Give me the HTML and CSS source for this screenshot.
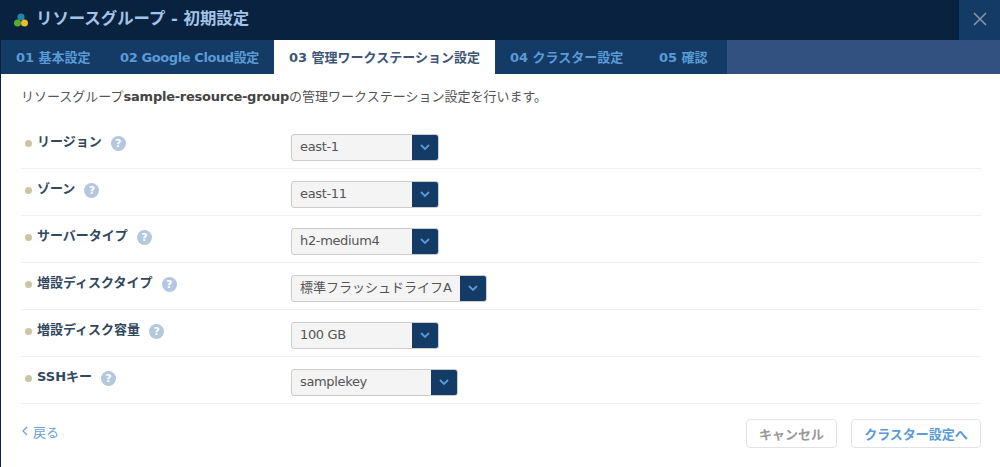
FILE: index.html
```html
<!DOCTYPE html>
<html lang="ja">
<head>
<meta charset="utf-8">
<title>リソースグループ - 初期設定</title>
<link rel="stylesheet" href="styles.css">
</head>
<body>
<div class="dialog">
  <header class="head">
    <h1 class="title">
      <svg class="logo" width="14" height="14" viewBox="0 0 14 14"><circle cx="7" cy="4" r="3.6" fill="#1f86a8"/><circle cx="3.5" cy="10" r="3.5" fill="#58ad2e"/><circle cx="10.5" cy="10" r="3.5" fill="#f0b92a"/></svg>
      <span class="title-text">リソースグループ - 初期設定</span>
    </h1>
    <button class="close" aria-label="閉じる"><svg width="14" height="14" viewBox="0 0 14 14"><path d="M1 1l12 12M13 1L1 13" stroke="#8a97a6" stroke-width="1.5" fill="none"/></svg></button>
  </header>
  <nav class="tabs">
    <a class="tab t1">01 基本設定</a>
    <a class="tab t2">02 Google Cloud設定</a>
    <a class="tab t3 active">03 管理ワークステーション設定</a>
    <a class="tab t4">04 クラスター設定</a>
    <a class="tab t5">05 確認</a>
  </nav>
  <main class="body">
    <p class="lead">リソースグループ<b>sample-resource-group</b>の管理ワークステーション設定を行います。</p>
    <div class="form">
      <div class="row">
        <div class="label"><i class="dot"></i><span class="name">リージョン</span><i class="help">?</i></div>
        <div class="select w148"><span class="val">east-1</span><span class="arrow"><svg width="10" height="6" viewBox="0 0 10 6"><path d="M1 1l4 4 4-4" stroke="#5b9bd5" stroke-width="1.8" fill="none"/></svg></span></div>
      </div>
      <div class="row">
        <div class="label"><i class="dot"></i><span class="name">ゾーン</span><i class="help">?</i></div>
        <div class="select w148"><span class="val">east-11</span><span class="arrow"><svg width="10" height="6" viewBox="0 0 10 6"><path d="M1 1l4 4 4-4" stroke="#5b9bd5" stroke-width="1.8" fill="none"/></svg></span></div>
      </div>
      <div class="row">
        <div class="label"><i class="dot"></i><span class="name">サーバータイプ</span><i class="help">?</i></div>
        <div class="select w148"><span class="val">h2-medium4</span><span class="arrow"><svg width="10" height="6" viewBox="0 0 10 6"><path d="M1 1l4 4 4-4" stroke="#5b9bd5" stroke-width="1.8" fill="none"/></svg></span></div>
      </div>
      <div class="row">
        <div class="label"><i class="dot"></i><span class="name">増設ディスクタイプ</span><i class="help">?</i></div>
        <div class="select w196"><span class="val jp">標準フラッシュドライフA</span><span class="arrow"><svg width="10" height="6" viewBox="0 0 10 6"><path d="M1 1l4 4 4-4" stroke="#5b9bd5" stroke-width="1.8" fill="none"/></svg></span></div>
      </div>
      <div class="row">
        <div class="label"><i class="dot"></i><span class="name">増設ディスク容量</span><i class="help">?</i></div>
        <div class="select w148"><span class="val">100 GB</span><span class="arrow"><svg width="10" height="6" viewBox="0 0 10 6"><path d="M1 1l4 4 4-4" stroke="#5b9bd5" stroke-width="1.8" fill="none"/></svg></span></div>
      </div>
      <div class="row">
        <div class="label"><i class="dot"></i><span class="name">SSHキー</span><i class="help">?</i></div>
        <div class="select w167"><span class="val">samplekey</span><span class="arrow"><svg width="10" height="6" viewBox="0 0 10 6"><path d="M1 1l4 4 4-4" stroke="#5b9bd5" stroke-width="1.8" fill="none"/></svg></span></div>
      </div>
    </div>
    <footer class="foot">
      <a class="back"><svg width="7" height="10" viewBox="0 0 7 10"><path d="M6 1L2 5l4 4" stroke="#6a9fd8" stroke-width="1.2" fill="none"/></svg>戻る</a>
      <div class="btns">
        <button class="btn cancel">キャンセル</button>
        <button class="btn next">クラスター設定へ</button>
      </div>
    </footer>
  </main>
</div>
</body>
</html>
```
FILE: styles.css
```css
* { box-sizing: border-box; }
html, body { margin: 0; padding: 0; background: #fff; }
body { font-family: "DejaVu Sans", "Noto Sans CJK JP", sans-serif; font-size: 13px; color: #444; }
.dialog { width: 1000px; height: 467px; border-left: 1px solid #0a2340; display: flex; flex-direction: column; overflow: hidden; }
.head { height: 40px; flex: none; background: #08223f; display: flex; justify-content: space-between; align-items: stretch; margin-left: -1px; }
.title { margin: 0; padding-left: 14px; display: flex; align-items: center; gap: 8px; font-size: 16.4px; font-weight: 700; color: #a5c3e6; }
.title-text { padding-bottom: 6px; }
.close { width: 41px; border: 0; padding: 0 0 3px; background: #143a66; display: flex; align-items: center; justify-content: center; }
.tabs { height: 34px; flex: none; background: #325180; display: flex; font-size: 13px; font-weight: 700; margin-left: -1px; }
.tab { display: flex; align-items: center; background: #143a66; color: #5b9bd5; padding: 0 0 2px 15px; white-space: nowrap; }
.t1 { width: 104px; padding-left: 16px; }
.t2 { width: 170px; padding-left: 16px; letter-spacing: -0.4px; }
.t3 { width: 221px; }
.t4 { width: 149px; }
.t5 { width: 83px; }
.tab.active { background: #fff; color: #3d5674; }
.body { flex: 1; padding: 0 19px 0 20px; display: flex; flex-direction: column; }
.lead { margin: 0; height: 48px; padding-top: 14px; line-height: 18px; font-size: 13px; color: #555; }
.lead b { font-weight: 700; color: #444; letter-spacing: -0.25px; }
.row { height: 47px; display: flex; align-items: center; border-bottom: 1px solid #edf0f4; }
.label { width: 270px; display: flex; align-items: center; font-weight: 700; font-size: 13px; color: #33475f; padding-left: 4px; margin-bottom: 4px; }
.name { padding-bottom: 6px; }
.dot { width: 7px; height: 7px; border-radius: 50%; background: #cbc6a2; margin-right: 5px; }
.help { width: 15px; height: 15px; border-radius: 50%; background: #b4c7de; color: #fff; font-style: normal; font-size: 11px; font-weight: 700; line-height: 15px; text-align: center; margin-left: 9px; }
.select { height: 27px; margin-top: 4px; display: flex; justify-content: space-between; border: 1px solid #ccc; border-radius: 3px; background: #f4f4f4; overflow: hidden; font-size: 13px; color: #555; }
.w148 { width: 148px; }
.w196 { width: 196px; }
.w167 { width: 167px; }
.val { padding-left: 8px; line-height: 24px; white-space: nowrap; letter-spacing: -0.35px; }
.val.jp { letter-spacing: 0; }
.arrow { width: 26px; flex: none; background: #143a66; display: flex; align-items: center; justify-content: center; }
.foot { display: flex; justify-content: space-between; align-items: center; height: 58px; }
.back { display: flex; align-items: center; gap: 5px; color: #6a9fd8; font-size: 13px; padding-bottom: 4px; }
.btns { display: flex; gap: 14px; }
.btn { height: 29px; border: 1px solid #dfe3e7; border-radius: 4px; background: #fff; font: 700 13px "DejaVu Sans", "Noto Sans CJK JP", sans-serif; padding: 0; }
.cancel { width: 91px; color: #999; }
.next { width: 130px; color: #5b9bd5; }
```
